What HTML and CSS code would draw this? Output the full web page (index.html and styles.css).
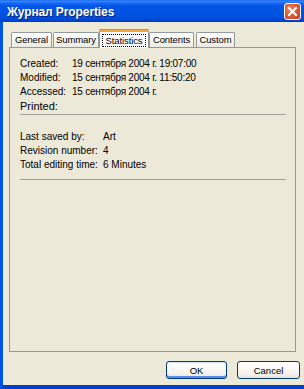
FILE: index.html
```html
<!DOCTYPE html>
<html>
<head>
<meta charset="utf-8">
<link rel="stylesheet" href="styles.css">
</head>
<body>
<div class="window">
  <div class="titlebar">
    <span class="title">Журнал Properties</span>
    <span class="close"><svg width="17" height="17" viewBox="0 0 17 17"><path d="M5 5 L12 12 M12 5 L5 12" stroke="#fff" stroke-width="2" stroke-linecap="square"/></svg></span>
  </div>
  <div class="frame">
    <div class="client">
      <div class="tabs">
        <div class="tab t1">General</div>
        <div class="tab t2">Summary</div>
        <div class="tab active"><span class="focus">Statistics</span></div>
        <div class="tab t4">Contents</div>
        <div class="tab t5">Custom</div>
      </div>
      <div class="panel">
        <div class="group g1">
          <div class="row"><span class="lbl">Created:</span><span>19 сентября 2004 г. 19:07:00</span></div>
          <div class="row"><span class="lbl">Modified:</span><span>15 сентября 2004 г. 11:50:20</span></div>
          <div class="row"><span class="lbl">Accessed:</span><span>15 сентября 2004 г.</span></div>
          <div class="row printed"><span class="lbl">Printed:</span><span></span></div>
        </div>
        <div class="sep"></div>
        <div class="group g2">
          <div class="row"><span class="lbl">Last saved by:</span><span>Art</span></div>
          <div class="row"><span class="lbl">Revision number:</span><span>4</span></div>
          <div class="row"><span class="lbl">Total editing time:</span><span>6 Minutes</span></div>
        </div>
        <div class="sep sep2"></div>
      </div>
      <div class="buttons">
        <div class="btn ok">OK</div>
        <div class="btn cancel">Cancel</div>
      </div>
    </div>
  </div>
</div>
</body>
</html>
```
FILE: styles.css
```css
html, body { margin: 0; padding: 0; background: #ece9d8; }
.window {
  width: 304px; height: 389px; overflow: hidden;
  font-family: "Liberation Sans", Arial, sans-serif; font-size: 10px; color: #000;
  display: flex; flex-direction: column;
}
.titlebar {
  height: 22px; flex: none;
  background: linear-gradient(to bottom, #0a5ce8 0px, #3d8bff 1px, #1969f5 3px, #0055e5 6px, #0052e0 16px, #0046d4 20px, #0038c0 22px);
  display: flex; align-items: center; justify-content: space-between;
  padding: 0 3px 0 7px; box-sizing: border-box;
}
.title {
  color: #fff; font-weight: bold; font-size: 12px; font-family: "Liberation Sans", Arial, sans-serif;
  text-shadow: 1px 1px 0 #0a1e80; letter-spacing: -0.1px; padding-top: 1px;
}
.close {
  width: 17px; height: 17px; box-sizing: border-box;
  border: 1px solid #fff; border-radius: 3px;
  background: radial-gradient(circle at 35% 35%, #ec8a6c 0%, #dc5a36 45%, #c2401c 100%);
  display: flex;
}
.close svg { margin: -1px; }
.frame {
  flex: 1; display: flex;
  border-left: 3px solid #0055e5; border-bottom: 4px solid #0041cc;
  box-shadow: inset 1px 0 0 #3a8cff;
}
.client { flex: 1; background: #ece9d8; display: flex; flex-direction: column; }
.tabs { display: flex; align-items: flex-end; height: 25px; padding-left: 8px; }
.tab {
  height: 15px; box-sizing: border-box; border: 1px solid #919b9c; border-bottom: none;
  border-radius: 2px 2px 0 0;
  background: linear-gradient(#ffffff, #f4f3ee 60%, #ebeae2);
  display: flex; align-items: center; justify-content: center;
  line-height: 12px; margin-right: 1px; font-size: 9.5px; letter-spacing: -0.1px;
}
.t1 { width: 41px; }
.t2 { width: 46px; }
.t4 { width: 45px; }
.t5 { width: 39px; margin-left: 1px; }
.tab.active {
  height: 19px; width: 50px; margin-bottom: -1px; position: relative; z-index: 1;
  background: #fcfcfe; margin-left: -1px; margin-right: 0;
  border-top: 3px solid #f3a53c;
  border-radius: 3px 3px 0 0;
}
.tab.active::before {
  content: ""; position: absolute; left: -1px; right: -1px; top: -3px; height: 1px; background: #e68b2c; border-radius: 2px 2px 0 0;
}
.focus { border: 1px dotted #000; padding: 0 2px; line-height: 11px; }
.panel {
  margin-left: 6px; width: 287px; height: 305px; box-sizing: border-box;
  border: 1px solid #919b9c;
  background: #ece9d8;
  padding: 9px 10px 0 10px;
}
.row { display: flex; height: 14px; line-height: 14px; white-space: nowrap; }
.g1 .lbl { width: 52px; flex: none; }
.g2 .lbl { width: 83px; flex: none; }
.g1 .row span:last-child { letter-spacing: -0.25px; }
.printed { font-size: 11px; }
.sep { height: 1px; background: #a0a0a0; margin: 1px 0 0 0; width: 266px; }
.g2 { margin-top: 15px; }
.sep2 { margin-top: 7px; }
.buttons { display: flex; justify-content: flex-end; gap: 10px; padding-right: 4px; margin-top: 9px; }
.btn {
  height: 18px; box-sizing: border-box; border: 1px solid #003c74; border-radius: 3px;
  background: linear-gradient(#ffffff, #f5f4ef 70%, #e6e3d6);
  display: flex; align-items: center; justify-content: center; font-size: 9.5px;
}
.ok { width: 61px; box-shadow: inset 0 -2px 0 #5c8cf0, inset 0 1px 0 #cee7ff; }
.cancel { width: 63px; }
```
